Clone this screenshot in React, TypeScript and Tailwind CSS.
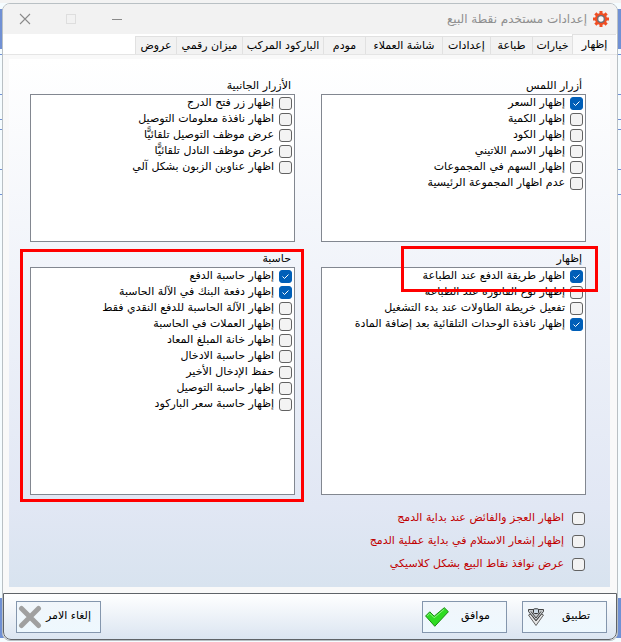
import { useState } from "react";

type Item = { label: string; checked?: boolean };

const tabs = [
  { name: "إظهار", width: "w-11" },
  { name: "خيارات", width: "w-10" },
  { name: "طباعة", width: "w-[42px]" },
  { name: "إعدادات", width: "w-12" },
  { name: "شاشة العملاء", width: "w-[77px]" },
  { name: "مودم", width: "w-[42px]" },
  { name: "الباركود المركب", width: "w-[81px]" },
  { name: "ميزان رقمي", width: "w-[66px]" },
  { name: "عروض", width: "w-[41px]" },
];

const touchButtons: Item[] = [
  { label: "إظهار السعر", checked: true },
  { label: "إظهار الكمية" },
  { label: "إظهار الكود" },
  { label: "إظهار الاسم اللاتيني" },
  { label: "إظهار السهم في المجموعات" },
  { label: "عدم اظهار المجموعة الرئيسية" },
];

const sideButtons: Item[] = [
  { label: "إظهار زر فتح الدرج" },
  { label: "اظهار نافذة معلومات التوصيل" },
  { label: "عرض موظف التوصيل تلقائيًّا" },
  { label: "عرض موظف النادل تلقائيًّا" },
  { label: "اظهار عناوين الزبون بشكل آلي" },
];

const display: Item[] = [
  { label: "اظهار طريقة الدفع عند الطباعة", checked: true },
  { label: "إظهار نوع الفاتورة عند الطباعة" },
  { label: "تفعيل خريطة الطاولات عند بدء التشغيل" },
  { label: "إظهار نافذة الوحدات التلقائية بعد إضافة المادة", checked: true },
];

const calculator: Item[] = [
  { label: "إظهار حاسبة الدفع", checked: true },
  { label: "إظهار دفعة البنك في الآلة الحاسبة", checked: true },
  { label: "إظهار الآلة الحاسبة للدفع النقدي فقط" },
  { label: "إظهار العملات في الحاسبة" },
  { label: "إظهار خانة المبلغ المعاد" },
  { label: "اظهار حاسبة الادخال" },
  { label: "حفظ الإدخال الأخير" },
  { label: "إظهار حاسبة التوصيل" },
  { label: "إظهار حاسبة سعر الباركود" },
];

const mergeOptions: Item[] = [
  { label: "اظهار العجز والفائض عند بداية الدمج" },
  { label: "إظهار إشعار الاستلام في بداية عملية الدمج" },
  { label: "عرض نوافذ نقاط البيع بشكل كلاسيكي" },
];

function Check({ item, className }: { item: Item; className: string }) {
  return (
    <label className={`flex items-center whitespace-nowrap ${className}`}>
      <span className="grid size-[13px] shrink-0">
        <input
          type="checkbox"
          defaultChecked={item.checked}
          className="peer col-start-1 row-start-1 size-[13px] appearance-none rounded-[3px] border border-[#626262] bg-[#f3f3f3] checked:border-[#005fb8] checked:bg-[#005fb8]"
        />
        <svg viewBox="0 0 13 13" className="pointer-events-none invisible col-start-1 row-start-1 size-[13px] peer-checked:visible">
          <path d="M3.5 6.5 5.5 8.5 9.5 4.5" fill="none" stroke="#fff" strokeWidth="1" />
        </svg>
      </span>
      <span>{item.label}</span>
    </label>
  );
}

function OptionList({ title, items, height }: { title: string; items: Item[]; height: string }) {
  return (
    <>
      <h2 className="h-4 pr-1 leading-4">{title}</h2>
      <div className={`border border-[#828790] bg-white pr-0.5 ${height}`}>
        {items.map((item) => (
          <Check key={item.label} item={item} className="h-4 gap-[5px]" />
        ))}
      </div>
    </>
  );
}

function Gear() {
  return (
    <svg viewBox="0 0 16 16" className="size-4">
      <g fill="#f04e23">
        {[0, 45, 90, 135].map((a) => (
          <rect key={a} x="6.5" y="0" width="3" height="16" transform={`rotate(${a} 8 8)`} />
        ))}
        <circle cx="8" cy="8" r="6.1" />
      </g>
      <circle cx="8" cy="8" r="3.3" fill="#fafafa" stroke="#6b6f78" strokeWidth="1.3" />
    </svg>
  );
}

const footerButton = "flex h-8 w-[85px] items-center justify-between border border-[#8496ad] bg-linear-to-b from-[#f1f6fb] to-[#eef8fe]";

// the window behind the dialog: blue bars at top and bottom, grid lines between them
const backdrop =
  "bg-[linear-gradient(#f3f3f3_3px,#f5fcff_3px_9px,#7090d4_9px_49px,#f5fcff_49px_54px,#7090d4_54px_55px,#f5fcff_55px_94px,#7090d4_94px_95px,#f5fcff_95px_119px,#7090d4_119px_120px,#f5fcff_120px_129px,#7090d4_129px_130px,#f5fcff_130px_169px,#7090d4_169px_170px,#f5fcff_170px_194px,#7090d4_194px_195px,#f5fcff_195px_598px,#7090d4_598px_638px,#f5fcff_638px)]";

export default function App() {
  const [active, setActive] = useState("إظهار");

  return (
    <div dir="rtl" className={`pt-[3px] pr-[3px] pb-px pl-0.5 font-['DejaVu_Sans',sans-serif] text-[11px] text-black ${backdrop}`}>
      <main className="overflow-hidden rounded-lg border border-[#b9c0c4] bg-[#f9f9f9]">
        <header className="flex h-[30px] items-center justify-between bg-[#f2f2f2] pr-2 pl-4 text-[#8f8f8f]">
          <div className="flex items-center gap-1.5">
            <Gear />
            <h1 className="text-[12px]">إعدادات مستخدم نقطة البيع</h1>
          </div>
          <div className="flex items-center gap-[34px]">
            <button aria-label="تصغير">
              <svg viewBox="0 0 12 12" className="size-3"><path d="M1 6.5H11" stroke="#8a8a8a" /></svg>
            </button>
            <button aria-label="تكبير" disabled>
              <svg viewBox="0 0 12 12" className="size-3"><rect x="1.5" y="1.5" width="9" height="9" fill="none" stroke="#dedede" /></svg>
            </button>
            <button aria-label="إغلاق">
              <svg viewBox="0 0 12 12" className="size-3"><path d="M1 1 11 11M11 1 1 11" stroke="#8a8a8a" strokeWidth="1.1" /></svg>
            </button>
          </div>
        </header>

        <nav role="tablist" className="flex h-5 items-end bg-white pr-px">
          {tabs.map((tab) => (
            <button
              key={tab.name}
              role="tab"
              aria-selected={active === tab.name}
              onClick={() => setActive(tab.name)}
              className={`shrink-0 whitespace-nowrap border-t border-l border-[#e1e1e1] leading-4 ${tab.width} ${active === tab.name ? "h-5 bg-[#f9f9f9]" : "h-[18px] bg-[#f2f2f2]"}`}
            >
              {tab.name}
            </button>
          ))}
        </nav>

        <div className="border-t border-[#e5e5e5] pt-1 pr-[7px] pb-1.5 pl-1.5">
          <div className="bg-linear-to-b from-white via-[#e1e7f4] via-85% to-[#d8e3ef] pt-[19px] pr-6 pb-[11px] pl-[21px]">
            <div className="grid grid-cols-2 gap-x-[26px] gap-y-[9px]">
              <section>
                <OptionList title="أزرار اللمس" items={touchButtons} height="h-[148px]" />
              </section>
              <section>
                <OptionList title="الأزرار الجانبية" items={sideButtons} height="h-[148px]" />
              </section>
              <section className="relative">
                <OptionList title="إظهار" items={display} height="h-[228px]" />
                <div className="pointer-events-none absolute -top-[5px] -right-3 h-[46px] w-[197px] border-3 border-[#ff0000]" />
              </section>
              <section className="relative">
                <OptionList title="حاسبة" items={calculator} height="h-[228px]" />
                <div className="pointer-events-none absolute -top-0.5 -right-[9px] -bottom-[7px] -left-2.5 border-3 border-[#ff0000]" />
              </section>
            </div>
            <div className="mt-3 pr-px text-[#c00000]">
              {mergeOptions.map((item) => (
                <Check key={item.label} item={item} className="h-[23px] gap-2" />
              ))}
            </div>
          </div>
        </div>

        <footer className="flex h-[47px] items-center gap-[15px] rounded-b-lg border border-[#5f6368] bg-linear-to-b from-white to-[#dbe5f1] pr-[9px] pl-3">
          <button className={`${footerButton} pr-4 pl-1`}>
            <span>تطبيق</span>
            <svg viewBox="0 0 18 18" className="size-[18px]">
              <path d="M1.5 7 3.5 6 9 13 14.5 6 16.5 7 9 17.5Z" fill="#e4e4e4" stroke="#555" strokeWidth=".9" />
              <path d="M1.5 1.5H16.5V3.5L9 12.5 1.5 3.5Z" fill="#c4c8cb" stroke="#333" strokeWidth=".9" />
              <path d="M4 3.5 9 10 14 3.5" fill="none" stroke="#444" />
              <rect x="6.5" y=".8" width="5" height="4.7" rx="1" fill="#cfdde8" stroke="#333" />
            </svg>
          </button>
          <button className={`${footerButton} pr-4 pl-0.5`}>
            <span>موافق</span>
            <svg viewBox="0 0 24 20" className="h-5 w-6">
              <path d="M.6 9 4.8 4.8 9.2 9.2 19.3 .7 23.4 4.7 9.8 19.3Z" fill="#2fdc22" stroke="#1a8c14" />
              <path d="M2.2 9 4.8 6.4 9.2 10.8 19.2 2.3" fill="none" stroke="#8df57f" />
            </svg>
          </button>
          <button className={`${footerButton} mr-auto pr-[9px] pl-px`}>
            <span>إلغاء الامر</span>
            <svg viewBox="0 0 24 24" className="size-6">
              <path d="M3.5 3.5 20.5 20.5M20.5 3.5 3.5 20.5" stroke="#a0a0a0" strokeWidth="5" strokeLinecap="round" />
            </svg>
          </button>
        </footer>
      </main>
    </div>
  );
}
